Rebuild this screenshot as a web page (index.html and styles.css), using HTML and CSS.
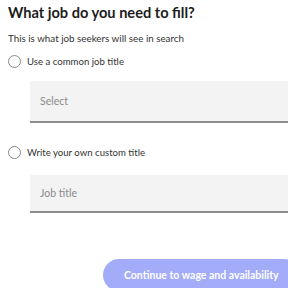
FILE: index.html
```html
<!DOCTYPE html>
<html>
<head>
<meta charset="utf-8">
<link rel="stylesheet" href="styles.css">
</head>
<body>
<div class="page">
  <h1 class="title">What job do you need to fill?</h1>
  <p class="sub">This is what job seekers will see in search</p>
  <label class="radio"><span class="circle"></span><span class="rlabel">Use a common job title</span></label>
  <div class="field field-select"><span class="ph">Select</span></div>
  <label class="radio radio2"><span class="circle"></span><span class="rlabel">Write your own custom title</span></label>
  <div class="field field-text"><span class="ph">Job title</span></div>
  <div class="actions"><button class="btn">Continue to wage and availability</button></div>
</div>
</body>
</html>
```
FILE: styles.css
```css
html, body {
  margin: 0;
  padding: 0;
  background: #fff;
  overflow: hidden;
}
body {
  font-family: "Lato", "Noto Sans", sans-serif;
  color: #222;
}
.page {
  width: 288px;
  height: 288px;
  box-sizing: border-box;
  overflow: hidden;
  padding-left: 8px;
  display: flex;
  flex-direction: column;
  align-items: flex-start;
}
.title {
  margin: 3px 0 0 0;
  font-size: 14.6px;
  line-height: 19px;
  font-weight: 700;
  color: #1c1c1c;
}
.sub {
  margin: 10px 0 0 0;
  font-size: 9.8px;
  line-height: 12px;
  color: #333;
}
.radio {
  display: flex;
  align-items: center;
  margin-top: 11px;
  height: 14px;
}
.circle {
  width: 11px;
  height: 11px;
  border: 1.2px solid #8a8a8a;
  border-radius: 50%;
  box-sizing: content-box;
}
.rlabel {
  margin-left: 6px;
  font-size: 9.6px;
  color: #333;
}
.field {
  margin-left: 22px;
  width: calc(100% - 22px);
  background: #f3f3f3;
  border-bottom: 2px solid #8c8c8c;
  display: flex;
  align-items: center;
  padding-left: 10px;
  box-sizing: border-box;
  flex-shrink: 0;
}
.field-select {
  margin-top: 13px;
  height: 42px;
}
.field-text {
  margin-top: 16px;
  height: 38px;
}
.radio2 {
  margin-top: 23px;
}
.ph {
  font-size: 10.5px;
  color: #8a8a8a;
}
.actions {
  margin-top: 46px;
  margin-left: 95px;
  flex-shrink: 0;
}
.btn {
  border: none;
  background: #a3acf9;
  color: #fff;
  font-family: "Lato", "Noto Sans", sans-serif;
  font-weight: 700;
  font-size: 10.5px;
  height: 32px;
  padding: 0 21px;
  border-radius: 16px;
  white-space: nowrap;
}
```
